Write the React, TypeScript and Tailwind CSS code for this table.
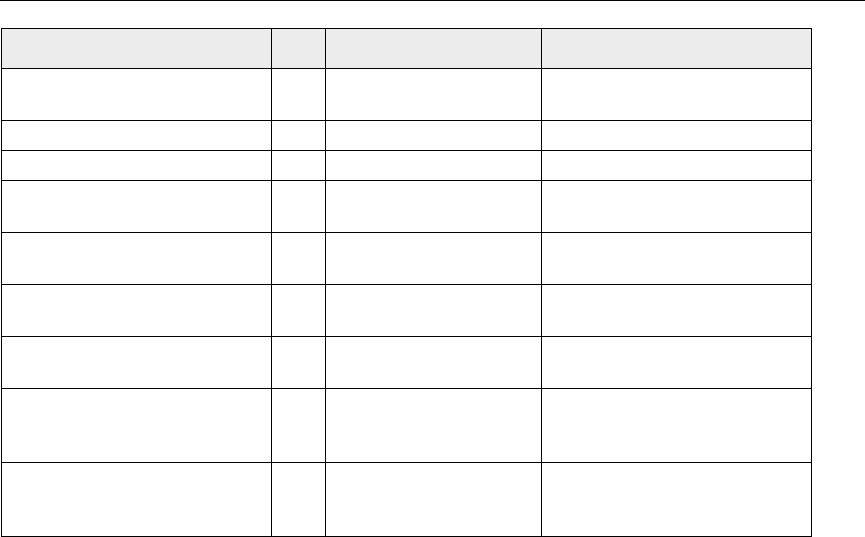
import React from "react";

const heights = ["h-[52px]", "h-[30px]", "h-[30px]", "h-[52px]", "h-[52px]", "h-[52px]", "h-[52px]", "h-[74px]", "h-[74px]"];
const cols = [0, 1, 2, 3];

export default function App() {
  return (
    <div className="w-[865px] h-[537px] bg-white border-t border-black pt-[27px] pl-px font-['Liberation_Sans',Arial,sans-serif] text-sm">
      <div className="grid grid-cols-[270px_54px_216px_270px] w-max border-l border-t border-black">
        {cols.map((c) => (
          <div key={"h" + c} className="h-[40px] bg-[#ececec] border-r border-b border-black" />
        ))}
        {heights.map((h, r) =>
          cols.map((c) => (
            <div key={r + "-" + c} className={`${h} border-r border-b border-black`} />
          ))
        )}
      </div>
    </div>
  );
}
